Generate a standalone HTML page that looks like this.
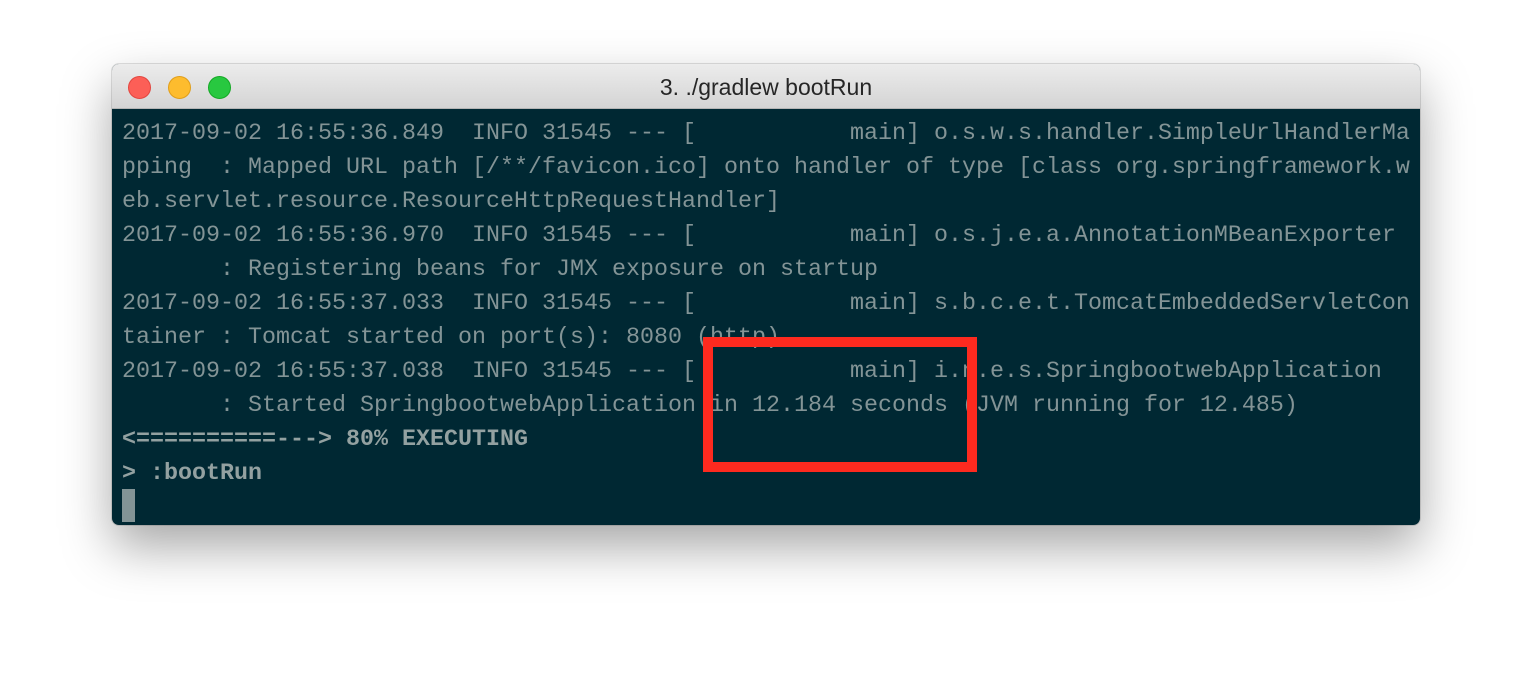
<!DOCTYPE html>
<html><head><meta charset="utf-8">
<style>
html,body{margin:0;padding:0;background:#fff;width:1532px;height:686px;overflow:hidden;position:relative}
.win{position:absolute;left:112px;top:64px;width:1308px;height:461px;border-radius:7px;overflow:hidden;
box-shadow:0 22px 50px rgba(0,0,0,0.35),0 0 0 1px rgba(0,0,0,0.12);background:#002833}
.tb{position:absolute;left:0;top:0;width:100%;height:44px;background:linear-gradient(#ececec,#d4d4d4);border-bottom:1px solid #b5b5b5;
font-family:"Liberation Sans",sans-serif;font-size:23px;color:#262626;text-align:center;line-height:46px}
.dot{position:absolute;top:12px;width:23px;height:23px;border-radius:50%;box-sizing:border-box}
.term{position:absolute;left:10px;top:53px;font-family:"Liberation Mono",monospace;font-size:23.33px;line-height:34px;color:#839496;white-space:pre}
b{color:#93a1a1;font-weight:600}
.cur{display:inline-block;width:13px;height:33px;background:#839496;vertical-align:top;margin-top:-2px}
.red{position:absolute;left:703px;top:337px;width:274px;height:135px;box-sizing:border-box;border:10px solid #fd2a1f}
</style></head><body>
<div class="win">
<div class="tb">3. ./gradlew bootRun
<div class="dot" style="left:16px;background:#fc5f57;border:1px solid #e2463f"></div>
<div class="dot" style="left:56px;background:#fdbc2e;border:1px solid #e09e1a"></div>
<div class="dot" style="left:96px;background:#28c840;border:1px solid #14a925"></div>
</div>
<div class="term">2017-09-02 16:55:36.849  INFO 31545 --- [           main] o.s.w.s.handler.SimpleUrlHandlerMa
pping  : Mapped URL path [/**/favicon.ico] onto handler of type [class org.springframework.w
eb.servlet.resource.ResourceHttpRequestHandler]
2017-09-02 16:55:36.970  INFO 31545 --- [           main] o.s.j.e.a.AnnotationMBeanExporter
       : Registering beans for JMX exposure on startup
2017-09-02 16:55:37.033  INFO 31545 --- [           main] s.b.c.e.t.TomcatEmbeddedServletCon
tainer : Tomcat started on port(s): 8080 (http)
2017-09-02 16:55:37.038  INFO 31545 --- [           main] i.n.e.s.SpringbootwebApplication
       : Started SpringbootwebApplication in 12.184 seconds (JVM running for 12.485)
<b>&lt;==========---&gt; 80% EXECUTING</b>
<b>&gt; :bootRun</b>
<span class="cur"></span></div>
</div>
<div class="red"></div>
</body></html>
